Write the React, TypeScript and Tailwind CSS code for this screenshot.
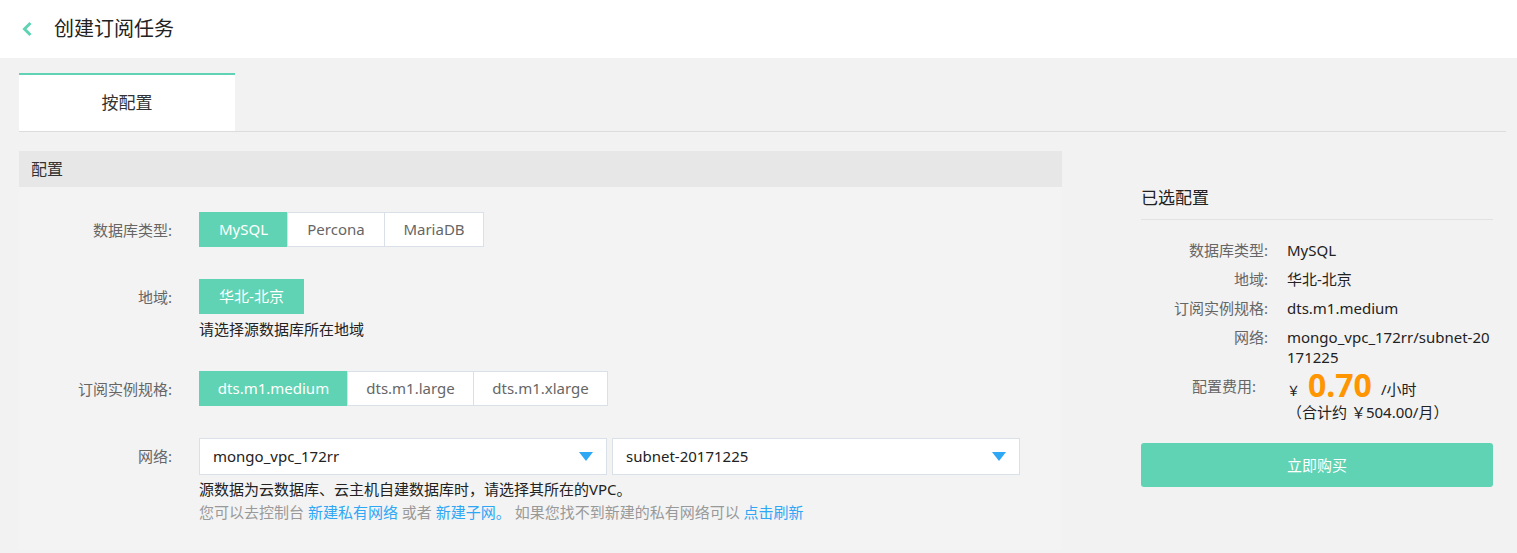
import React from 'react';

const font = { fontFamily: '"Noto Sans", "Noto Sans CJK SC", sans-serif' };

function Segment({ items, active }: { items: { label: string; w: string }[]; active: number }) {
  return (
    <div className="flex h-[35px]">
      {items.map((it, i) => (
        <div
          key={it.label}
          className={
            i === active
              ? `${it.w} flex items-center justify-center bg-[#5fd3b4] border border-[#5fd3b4] text-white text-[15px]`
              : `${it.w} flex items-center justify-center bg-white border border-[#d9e0e7] -ml-px text-[#666] text-[15px]`
          }
        >
          {it.label}
        </div>
      ))}
    </div>
  );
}

function Caret() {
  return (
    <svg width="14" height="9" viewBox="0 0 14 9">
      <path d="M0 0h14L7 9z" fill="#2ea7f5" />
    </svg>
  );
}

function Select({ value }: { value: string }) {
  return (
    <div className="w-[408px] h-[37px] bg-white border border-[#d9e0e7] flex items-center justify-between pl-[13px] pr-[13px] text-[15px] text-[#222]">
      <span>{value}</span>
      <Caret />
    </div>
  );
}

function Row({ label, children }: { label: string; children: React.ReactNode }) {
  return (
    <div className="flex">
      <div className="w-[180px] pr-[27px] pt-[7px] text-right text-[15px] text-[#666]">{label}:</div>
      <div className="flex-1">{children}</div>
    </div>
  );
}

function Summary({ label, children }: { label: string; children: React.ReactNode }) {
  return (
    <div className="flex text-[15px] leading-[20px]">
      <div className="w-[127px] text-right text-[#666]">{label}:</div>
      <div className="flex-1 pl-[19px] text-[#222] break-all">{children}</div>
    </div>
  );
}

export default function App() {
  return (
    <div className="min-h-[553px] bg-[#f2f2f3]" style={font}>
      <header className="h-[58px] bg-white flex items-center pl-[21px]">
        <svg width="12" height="16" viewBox="0 0 12 16" className="mr-[21px]">
          <path d="M9.5 2L3.5 8L9.5 14" stroke="#5fd3b4" strokeWidth="3" fill="none" />
        </svg>
        <h1 className="text-[20px] text-[#222]">创建订阅任务</h1>
      </header>

      <div className="pl-[19px] pr-[11px] pt-[15px]">
        <div className="flex border-b border-[#dcdcdc]">
          <div className="w-[216px] h-[58px] bg-white border-t-2 border-[#5fd3b4] flex items-center justify-center text-[17px] text-[#333]">
            按配置
          </div>
        </div>

        <div className="flex mt-[19px]">
          <div className="w-[1043px]">
            <div className="h-[36px] bg-[#e7e7e7] flex items-center pl-[12px] text-[16px] text-[#333]">配置</div>
            <div className="pt-[25px] flex flex-col gap-[32px] bg-[#f3f3f3]">
              <Row label="数据库类型">
                <Segment
                  active={0}
                  items={[
                    { label: 'MySQL', w: 'w-[89px]' },
                    { label: 'Percona', w: 'w-[98px]' },
                    { label: 'MariaDB', w: 'w-[100px]' },
                  ]}
                />
              </Row>
              <Row label="地域">
                <Segment active={0} items={[{ label: '华北-北京', w: 'w-[105px]' }]} />
                <div className="text-[15px] leading-[20px] text-[#222] mt-[5px]">请选择源数据库所在地域</div>
              </Row>
              <Row label="订阅实例规格">
                <Segment
                  active={0}
                  items={[
                    { label: 'dts.m1.medium', w: 'w-[149px]' },
                    { label: 'dts.m1.large', w: 'w-[127px]' },
                    { label: 'dts.m1.xlarge', w: 'w-[135px]' },
                  ]}
                />
              </Row>
              <Row label="网络">
                <div className="flex gap-[5px]">
                  <Select value="mongo_vpc_172rr" />
                  <Select value="subnet-20171225" />
                </div>
                <div className="text-[15px] text-[#222] mt-[4px] leading-[20px]">源数据为云数据库、云主机自建数据库时，请选择其所在的VPC。</div>
                <div className="text-[15px] text-[#999] mt-[3px] leading-[20px] pb-[28px]">
                  您可以去控制台 <span className="text-[#2ea7f5]">新建私有网络</span> 或者 <span className="text-[#2ea7f5]">新建子网。</span> 如果您找不到新建的私有网络可以 <span className="text-[#2ea7f5]">点击刷新</span>
                </div>
              </Row>
            </div>
          </div>

          <aside className="ml-[79px] w-[352px] pt-[34px]">
            <div className="text-[17px] text-[#222] pb-[8px] border-b border-[#e2e2e2]">已选配置</div>
            <div className="pt-[20px] flex flex-col gap-[9px]">
              <Summary label="数据库类型">MySQL</Summary>
              <Summary label="地域">华北-北京</Summary>
              <Summary label="订阅实例规格">dts.m1.medium</Summary>
              <Summary label="网络">mongo_vpc_172rr/subnet-20171225</Summary>
              <div className="flex text-[15px] -mt-[4px]">
                <div className="w-[127px] text-right text-[#666] pt-[3px] pr-[12px]">配置费用:</div>
                <div className="flex-1 pl-[19px] text-[#222]">
                  <div className="flex items-end h-[30px]">
                    <span className="text-[13px] mr-[8px] mb-[1px]">￥</span>
                    <span className="text-[32px] leading-[34px] font-bold text-[#ff9500]">0.70</span>
                    <span className="ml-[9px] mb-[1px]">/小时</span>
                  </div>
                  <div className="-mt-[1px]">（合计约 ￥504.00/月）</div>
                </div>
              </div>
            </div>
            <button className="mt-[20px] w-full h-[44px] rounded-[3px] bg-[#5fd3b4] text-white text-[15px]">立即购买</button>
          </aside>
        </div>
      </div>
    </div>
  );
}
